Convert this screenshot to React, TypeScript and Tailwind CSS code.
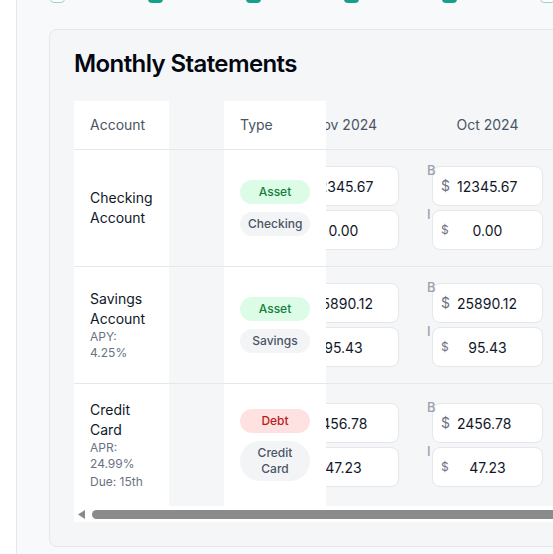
import React from "react";

type Statement = { balance: string; interest: string };

interface AccountRow {
  name: string;
  notes: string[];
  category: "Asset" | "Debt";
  kind: string;
  months: Statement[];
}

const months = ["Nov 2024", "Oct 2024", "Sep 2024"];

const rows: AccountRow[] = [
  {
    name: "Checking Account",
    notes: [],
    category: "Asset",
    kind: "Checking",
    months: [
      { balance: "12345.67", interest: "0.00" },
      { balance: "12345.67", interest: "0.00" },
      { balance: "12345.67", interest: "0.00" },
    ],
  },
  {
    name: "Savings Account",
    notes: ["APY: 4.25%"],
    category: "Asset",
    kind: "Savings",
    months: [
      { balance: "25890.12", interest: "95.43" },
      { balance: "25890.12", interest: "95.43" },
      { balance: "25890.12", interest: "95.43" },
    ],
  },
  {
    name: "Credit Card",
    notes: ["APR: 24.99%", "Due: 15th"],
    category: "Debt",
    kind: "Credit Card",
    months: [
      { balance: "2456.78", interest: "47.23" },
      { balance: "2456.78", interest: "47.23" },
      { balance: "2456.78", interest: "47.23" },
    ],
  },
];

const filters = [
  { label: "All", checked: false },
  { label: "Assets", checked: true },
  { label: "Debts", checked: true },
  { label: "Expenses", checked: true },
  { label: "Savings", checked: true },
  { label: "Other", checked: false },
];

function FilterBar() {
  return (
    <div className="-mt-[13px] ml-px flex h-4 shrink-0">
      {filters.map((f) => (
        <label key={f.label} className="flex w-[98px] shrink-0 items-start gap-2 text-sm text-gray-700">
          <span
            className={
              f.checked
                ? "h-4 w-[15px] shrink-0 rounded-[4px] bg-[#16a08a]"
                : "h-4 w-[15px] shrink-0 rounded-[4px] border border-[#9fd2c7] bg-white"
            }
          />
          <span className="-translate-y-[5px] leading-4">{f.label}</span>
        </label>
      ))}
    </div>
  );
}

function MoneyInput({ label, value, centered }: { label: string; value: string; centered?: boolean }) {
  return (
    <div className="relative h-10 w-[111px] rounded-lg border border-gray-200 bg-white">
      <span className="absolute -left-[6px] -top-[5px] text-[13px] font-medium leading-4 text-gray-400">
        {label}
      </span>
      <span
        className={
          centered
            ? "absolute left-2 top-1/2 -translate-y-1/2 text-xs text-gray-500"
            : "absolute left-2 top-1/2 -translate-y-1/2 text-sm text-gray-500"
        }
      >
        $
      </span>
      <input
        readOnly
        value={value}
        className={
          centered
            ? "h-full w-full bg-transparent text-center text-sm text-gray-900 outline-none"
            : "h-full w-full bg-transparent pl-6 text-sm text-gray-900 outline-none"
        }
      />
    </div>
  );
}

function Badge({ tone, children }: { tone: "green" | "red" | "gray"; children: React.ReactNode }) {
  const tones = {
    green: "bg-[#dcfce7] text-[#15803d]",
    red: "bg-[#fee2e2] text-[#b91c1c]",
    gray: "bg-gray-100 text-gray-600",
  };
  return (
    <span className={`block w-full rounded-full px-2 py-1 text-center text-xs font-medium leading-4 ${tones[tone]}`}>
      {children}
    </span>
  );
}

export default function App() {
  return (
    <div className="flex h-[554px] w-[553px] overflow-hidden bg-[#f8f9fa] font-['Inter',sans-serif]">
      <aside className="w-[17px] shrink-0 border-r border-gray-200 bg-white" />

      <main className="flex min-w-0 flex-1 flex-col pl-8">
        <FilterBar />

        <section className="mt-[26px] w-[640px] shrink-0 rounded-lg border border-[#e3e6ea] bg-[#f5f6f7] px-6 pb-6 pt-[18px]">
          <h2 className="mb-[21px] text-2xl font-semibold leading-8 tracking-tight text-gray-950">Monthly Statements</h2>

          <div className="overflow-hidden">
            {/* header */}
            <div className="flex h-[49px] border-b border-gray-200 text-sm text-gray-600">
              <div className="flex w-[95px] shrink-0 items-center bg-white px-4">Account</div>
              <div className="w-[55px] shrink-0" />
              <div className="relative z-20 flex w-[102px] shrink-0 items-center bg-white px-4">Type</div>
              {months.map((m, i) => (
                <div
                  key={m}
                  className={
                    i === 0
                      ? "-ml-[53px] flex w-[143px] shrink-0 items-center justify-center"
                      : "flex w-[143px] shrink-0 items-center justify-center"
                  }
                >
                  {m}
                </div>
              ))}
            </div>

            {rows.map((row, r) => (
              <div
                key={row.name}
                className={r < rows.length - 1 ? "flex border-b border-gray-200" : "flex"}
              >
                <div className="flex w-[95px] shrink-0 flex-col justify-center bg-white px-4 py-4">
                  <span className="text-sm leading-5 text-gray-900">{row.name}</span>
                  {row.notes.map((n, k) => (
                    <span key={n} className={k > 0 ? "mt-0.5 text-xs leading-4 text-gray-500" : "text-xs leading-4 text-gray-500"}>
                      {n}
                    </span>
                  ))}
                </div>
                <div className="w-[55px] shrink-0" />
                <div className="relative z-20 flex w-[102px] shrink-0 flex-col justify-center gap-2 bg-white px-4 py-4">
                  <Badge tone={row.category === "Asset" ? "green" : "red"}>{row.category}</Badge>
                  <Badge tone="gray">{row.kind}</Badge>
                </div>
                {row.months.map((s, i) => (
                  <div
                    key={i}
                    className={
                      i === 0
                        ? "-ml-[54px] flex w-[144px] shrink-0 flex-col justify-center gap-1 px-4 py-4"
                        : "flex w-[143px] shrink-0 flex-col justify-center gap-1 px-4 py-4"
                    }
                  >
                    <MoneyInput label="B" value={s.balance} />
                    <MoneyInput label="I" value={s.interest} centered />
                  </div>
                ))}
              </div>
            ))}

            {/* horizontal scrollbar */}
            <div className="flex h-4 items-center gap-[7px] bg-white pl-1">
              <svg width="7" height="9" viewBox="0 0 7 9" className="shrink-0">
                <path d="M7 0 L0 4.5 L7 9 Z" fill="#8a8a8a" />
              </svg>
              <div className="h-[9px] flex-1 rounded-full bg-[#8b8b8b]" />
            </div>
          </div>
        </section>
      </main>
    </div>
  );
}
